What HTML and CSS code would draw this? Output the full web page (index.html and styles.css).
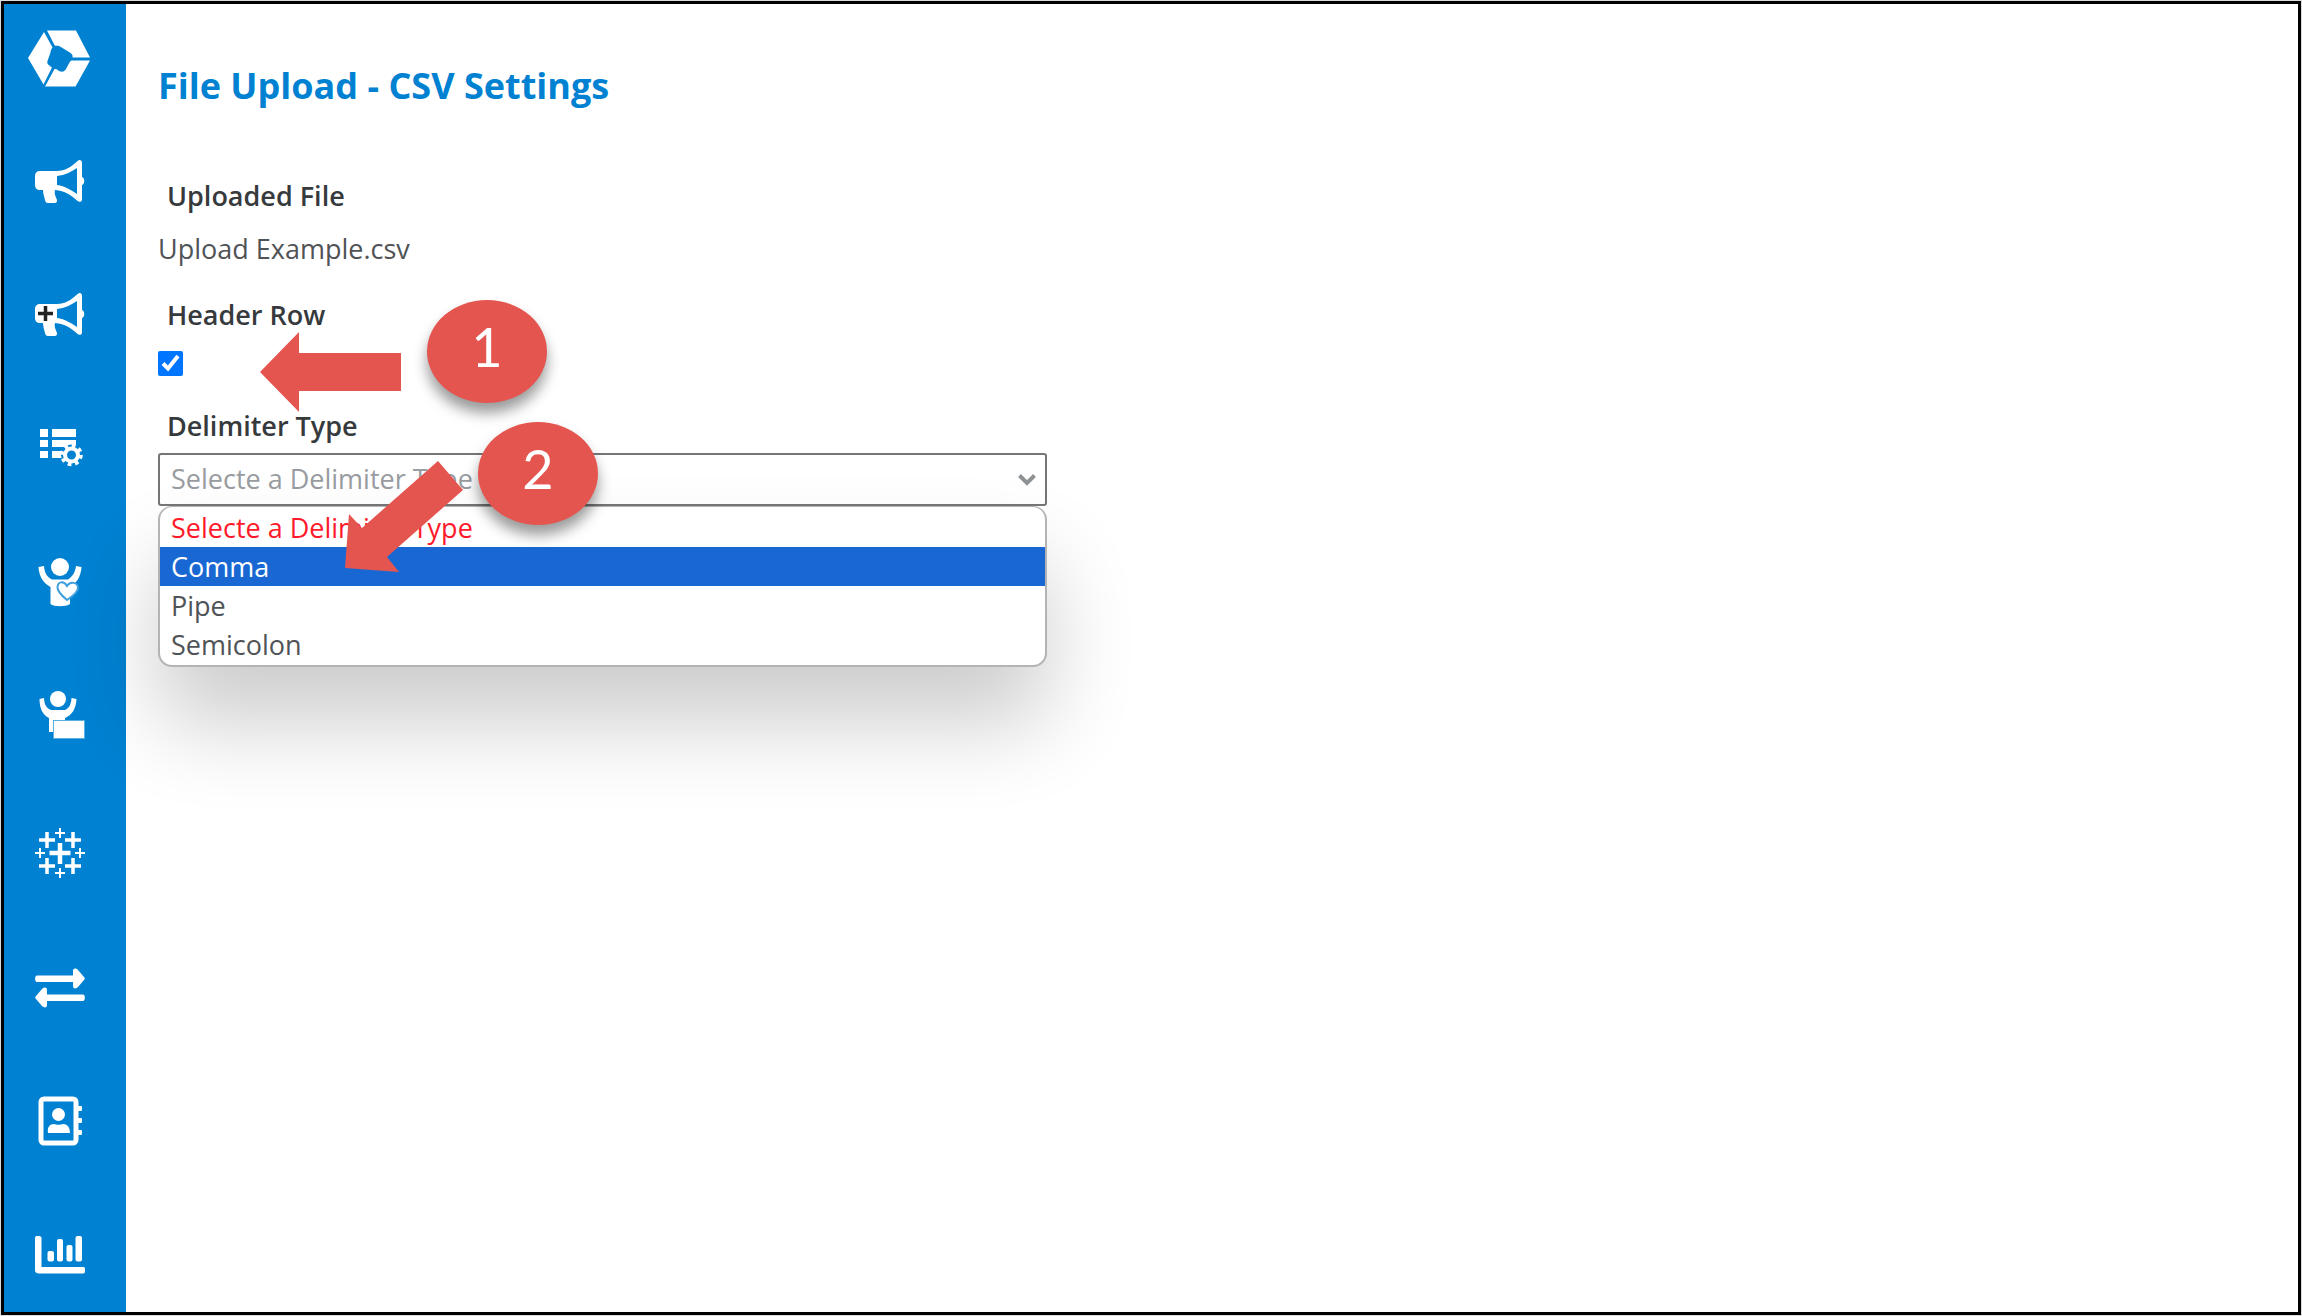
FILE: index.html
```html
<!DOCTYPE html>
<html lang="en">
<head>
    <meta charset="UTF-8">
    <meta name="viewport" content="width=device-width, initial-scale=1.0">
    <title>File Upload - CSV Settings</title>
    <link rel="stylesheet" href="styles.css">
</head>
<body>
    <div class="app">
        <!-- Sidebar -->
        <aside class="sidebar">
            <a href="#" class="logo" aria-label="Home">
                <svg viewBox="0 0 62 57" fill="#fff">
                    <path d="M19 0.5H48L62 27.5H44.500C45 25 44 23.500 41 22L32 16.500C29 15 27.500 16.500 26.500 15Z"/>
                    <path d="M16 2L24.500 17.500C23.500 19 22.500 20 22.500 22.500L19.500 31C18.500 34 21 35 24 37.500L15.500 54.500L0 28Z"/>
                    <path d="M62 30.500L47.500 56.500H17L26.500 39C29 38.500 30 41 32.500 41.500C35 42 37 41.500 38.500 38L41.500 32.500C42.500 31 43 30.500 44 30.500Z"/>
                </svg>
            </a>
            <nav class="nav">
                <a href="#" aria-label="Campaigns">
                    <svg viewBox="0 0 50 50">
                        <path fill="#fff" d="M5 14H22C30 14 36 10 42 4.500C44 2 47 2.500 47 6V20C50 21 50 27 47 28V42C47 45.500 44 45.500 42 43.500C36 38 30 34 20 33C19 37 21 40 22 43C22.500 45 21 46 20 46H13C11 46 10.500 45 10 43C9 39 8 36 8 33H5C2 33 0 31 0 28V19C0 16 2 14 5 14Z"/>
                        <path fill="#0081d1" d="M22 19C30 18 36 15 42 11V37C36 33 30 29 22 28Z"/>
                    </svg>
                </a>
                <a href="#" aria-label="New campaign">
                    <svg viewBox="0 1 50 50">
                        <path fill="#fff" d="M5 14H22C30 14 36 10 42 4.500C44 2 47 2.500 47 6V20C50 21 50 27 47 28V42C47 45.500 44 45.500 42 43.500C36 38 30 34 20 33C19 37 21 40 22 43C22.500 45 21 46 20 46H13C11 46 10.500 45 10 43C9 39 8 36 8 33H5C2 33 0 31 0 28V19C0 16 2 14 5 14Z"/>
                        <path fill="#0081d1" d="M22 19C30 18 36 15 42 11V37C36 33 30 29 22 28Z"/>
                        <path stroke="#222" stroke-width="3.500" d="M10.500 16V31M3 23.500H18"/>
                    </svg>
                </a>
                <a href="#" aria-label="List settings">
                    <svg viewBox="0 3 50 50" fill="#fff">
                        <path d="M5 6H13V14H5ZM17 6H41V14H17ZM5 17H13V24H5ZM17 17H41V24H17ZM5 28H13V35H5ZM17 28H27V35H17Z"/>
                        <circle cx="36.500" cy="32" r="10.500" fill="#0081d1"/>
                        <circle cx="36.500" cy="32" r="6.500" fill="none" stroke="#fff" stroke-width="4"/>
                        <circle cx="36.500" cy="32" r="9.500" fill="none" stroke="#fff" stroke-width="3.500" stroke-dasharray="3.700 3.760"/>
                    </svg>
                </a>
                <a href="#" aria-label="Favorites">
                    <svg viewBox="0 4 50 50" fill="#fff">
                        <circle cx="25" cy="11" r="9"/>
                        <path d="M3.500 11L9 10C9.500 17 12 21 17 23.500H33C37 21 40 17 41 10L46.500 11C46 20 42 27 35 31V48C31 51 19 51 15.500 48V31C8 27 4 20 3.500 11Z"/>
                        <path stroke="#3d9fdc" stroke-width="2" d="M32 44C26 39 22 35 22.500 31C23 25 29 25 32 30C35 25 43 26 43 32C43 36 38 40 32 44Z"/>
                    </svg>
                </a>
                <a href="#" aria-label="Audience">
                    <svg viewBox="0 5 50 50" fill="#fff">
                        <circle cx="23" cy="10" r="8"/>
                        <path d="M4.500 10L9 9C9.500 17 12 19 16 21H30C34 19 36 16 36.500 9L41.500 10C41 20 37 26 30 29V31H18V43H14V29C8 26 4.500 20 4.500 10Z"/>
                        <path stroke="#59aee2" stroke-width="1" d="M18.500 31.500H49.500V49.500H18.500Z"/>
                    </svg>
                </a>
                <a href="#" aria-label="Analytics">
                    <svg viewBox="0 0 50 50" fill="none" stroke="#fff">
                        <path stroke-width="4.500" d="M25 15V36M14.500 25H35.500"/>
                        <path stroke-width="3.500" d="M12 4V20M4 12H20M38 4V20M30 12H46M12 30V46M4 38H20M38 30V46M30 38H46"/>
                        <path stroke-width="2" d="M25 0V10M20 5H30M25 40V50M20 45H30M5 20V30M0 25H10M45 20V30M40 25H50"/>
                    </svg>
                </a>
                <a href="#" aria-label="Transfers">
                    <svg viewBox="0 0 50 50" fill="#fff">
                        <path d="M2 12.500H38V8C38 5 41 5 43 7L49 14C50 15 50 16 49 17L43 24C41 26 38 26 38 23V19H2C-0.500 19 -0.500 12.500 2 12.500Z"/>
                        <path d="M48 31.500H12V27C12 24 9 24 7 26L1 33C0 34 0 35 1 36L7 43C9 45 12 45 12 42V38H48C50.500 38 50.500 31.500 48 31.500Z"/>
                    </svg>
                </a>
                <a href="#" aria-label="Contacts">
                    <svg viewBox="0 1 50 50" fill="#fff">
                        <rect x="6" y="3" width="35" height="44" rx="3" fill="none" stroke="#fff" stroke-width="5"/>
                        <path d="M42 10H46Q47 10 47 11V14Q47 15 46 15H42ZM42 22H46Q47 22 47 23V26Q47 27 46 27H42ZM42 34H46Q47 34 47 35V38Q47 39 46 39H42Z"/>
                        <circle cx="23.500" cy="18.500" r="6.500"/>
                        <path d="M13 37C12 31 15 28 19 28C21 29 26 29 28 28C32 28 35 31 35 37Z"/>
                    </svg>
                </a>
                <a href="#" aria-label="Reports">
                    <svg viewBox="0 1 50 50" fill="#fff">
                        <path d="M2 6H4C6 6 6.500 7 6.500 8V37H48C50 37 50 38 50 39V41C50 43 49 43.500 48 43.500H4C1 43.500 0 42 0 40V8C0 6.500 1 6 2 6Z"/>
                        <rect x="12.500" y="21" width="6.500" height="10.500" rx="2"/>
                        <rect x="22" y="9" width="6" height="22.500" rx="2"/>
                        <rect x="31.500" y="15" width="6" height="16.500" rx="2"/>
                        <rect x="40.500" y="6" width="6.500" height="25.500" rx="2"/>
                    </svg>
                </a>
            </nav>
        </aside>

        <!-- Page content -->
        <main class="content">
            <h1>File Upload - CSV Settings</h1>
            <form class="settings" action="#" method="post">
                <div class="field">
                    <label for="file-name">Uploaded File</label>
                    <output id="file-name" class="file-name">Upload Example.csv</output>
                </div>

                <div class="field">
                    <label for="header-row">Header Row</label>
                    <input type="checkbox" id="header-row" name="header-row" class="checkbox" checked>
                </div>

                <div class="field select-field">
                    <label for="delimiter">Delimiter Type</label>
                    <select id="delimiter" name="delimiter">
                        <option value="">Selecte a Delimiter Type</option>
                        <option>Comma</option>
                        <option>Pipe</option>
                        <option>Semicolon</option>
                    </select>
                    <svg class="chevron" viewBox="0 0 18 12"><path fill="none" stroke="#8f9294" stroke-width="4" d="M1.500 1.500L9 9L16.500 1.500"/></svg>
                    <ul class="options" role="listbox" aria-label="Delimiter Type">
                        <li class="option placeholder" role="option">Selecte a Delimiter Type</li>
                        <li class="option selected" role="option" aria-selected="true">Comma</li>
                        <li class="option" role="option">Pipe</li>
                        <li class="option" role="option">Semicolon</li>
                    </ul>
                </div>
            </form>

            <!-- Step callouts -->
            <svg class="arrow arrow-one" viewBox="0 0 141 80"><path d="M0 40L39 0V21H141V59H39V80Z"/></svg>
            <span class="step step-one">1</span>
            <svg class="arrow arrow-two" viewBox="0 0 118 111"><path d="M0 107L4 53L17 67L93 0L118 29L42 96L54 111Z"/></svg>
            <span class="step step-two">2</span>
        </main>
    </div>
</body>
</html>
```

FILE: styles.css
```css
* {
    box-sizing: border-box;
}

body {
    margin: 0;
    padding: 1px;
    background: #dcdcdc;
    font-family: "Open Sans", "Noto Sans", sans-serif;
    font-size: 27px;
    color: #505356;
}

.app {
    display: flex;
    min-height: calc(100vh - 2px);
    border: 3px solid #000;
    background: #fff;
}

/* Sidebar */
.sidebar {
    display: flex;
    flex-direction: column;
    width: 122px;
    background: #0081d1;
}

.logo {
    padding: 26px 0 0 24px;
}

.logo svg {
    display: block;
    width: 62px;
    height: 57px;
}

.nav {
    flex: 1;
    display: flex;
    flex-direction: column;
    justify-content: space-between;
    padding: 70px 0 31px 31px;
}

.nav svg {
    display: block;
    width: 50px;
    height: 50px;
    overflow: visible;
}

/* Content */
.content {
    position: relative;
    flex: 1;
    padding: 58px 32px;
}

h1 {
    margin: 0 0 66px;
    font-size: 36px;
    line-height: 48px;
    color: #0081d1;
}

.settings {
    max-width: 889px;
}

.field {
    display: flex;
    flex-direction: column;
    align-items: flex-start;
    margin-bottom: 26px;
}

label {
    padding-left: 9px;
    font-weight: 600;
    line-height: 40px;
    color: #363a3d;
}

.file-name {
    padding-top: 13px;
    line-height: 40px;
}

.checkbox {
    width: 25px;
    height: 25px;
    margin: 16px 0 4px;
    accent-color: #0075ff;
}

/* Delimiter drop-down */
.select-field {
    position: relative;
}

select {
    appearance: none;
    width: 100%;
    height: 53px;
    margin-top: 7px;
    padding: 0 11px 2px;
    border: 2px solid #767676;
    border-radius: 3px;
    background: #fff;
    font: inherit;
    color: #999ca0;
}

.chevron {
    position: absolute;
    right: 11px;
    bottom: 20px;
    width: 18px;
    height: 12px;
}

.options {
    position: absolute;
    top: 100%;
    left: 0;
    width: 100%;
    margin: 0;
    padding: 1px 0;
    border: 2px solid #b4b4b4;
    border-top-width: 1px;
    border-radius: 14px;
    background: #fff;
    box-shadow: 0 56px 88px rgba(0, 0, 0, 0.2);
    list-style: none;
}

.option {
    padding-left: 11px;
    line-height: 39px;
}

.placeholder {
    color: #ff1a2b;
}

.selected {
    background: #1967d2;
    color: #fff;
}

/* Step callouts */
.arrow {
    position: absolute;
    fill: #e5554f;
}

.arrow-one {
    top: 328px;
    left: 134px;
    width: 141px;
    height: 80px;
}

.arrow-two {
    top: 457px;
    left: 219px;
    width: 118px;
    height: 111px;
}

.step {
    position: absolute;
    width: 120px;
    height: 103px;
    border-radius: 50%;
    background: #e5554f;
    box-shadow: 0 10px 14px rgba(0, 0, 0, 0.4);
    font-family: Lato, sans-serif;
    font-size: 54px;
    line-height: 94px;
    text-align: center;
    color: #fff;
}

.step-one {
    top: 296px;
    left: 301px;
}

.step-two {
    top: 418px;
    left: 352px;
}
```
